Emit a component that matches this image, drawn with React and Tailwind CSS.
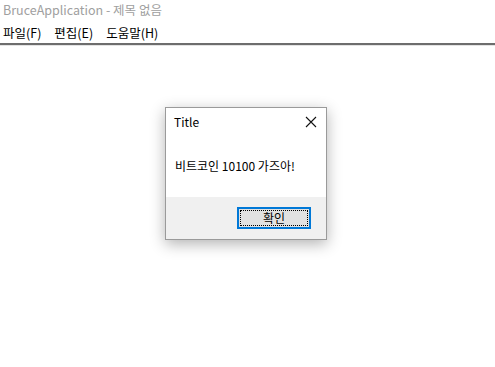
import React from "react";

export default function App() {
  return (
    <div
      className="w-[495px] h-[367px] bg-white flex flex-col overflow-hidden text-black"
      style={{ fontFamily: '"Noto Sans CJK KR", "Noto Sans", sans-serif' }}
    >
      {/* Window title */}
      <div className="h-[20px] pl-[3px] pt-[1px] flex items-center text-[12.5px] text-[#a0a0a0]">
        BruceApplication - 제목 없음
      </div>

      {/* Menu bar */}
      <div className="h-[23px] pl-[3px] pt-[3px] flex items-center gap-[13px] text-[12.5px]">
        <span>파일(F)</span>
        <span>편집(E)</span>
        <span>도움말(H)</span>
      </div>
      <div className="h-[2px] bg-[#6d6d6d]" />
      <div className="h-[1px] bg-[#e3e3e3]" />

      {/* Content */}
      <div className="flex-1 pt-[61px] pl-[165px]">
        <div className="w-[162px] h-[133px] bg-white border border-[#9a9a9a] shadow-[0_4px_14px_rgba(0,0,0,0.3)] flex flex-col">
          <div className="h-[28px] flex items-center justify-between pl-[8px] pr-[9px] text-[12px]">
            <span>Title</span>
            <svg width="12" height="12" viewBox="0 0 12 12" fill="none" stroke="#111" strokeWidth="1.1">
              <path d="M1 1 L11 11 M11 1 L1 11" />
            </svg>
          </div>
          <div className="h-[61px] pl-[9px] pt-[21px] text-[12px] leading-[17px]">비트코인 10100 가즈아!</div>
          <div className="flex-1 bg-[#f0f0f0] flex items-start justify-end pt-[10px] pr-[15px]">
            <button className="w-[74px] h-[22px] border-2 border-[#0078d7] bg-[#e1e1e1] p-[1px] text-[12px]">
              <div className="w-full h-full border border-dotted border-black flex items-center justify-center leading-none">
                확인
              </div>
            </button>
          </div>
        </div>
      </div>
    </div>
  );
}
